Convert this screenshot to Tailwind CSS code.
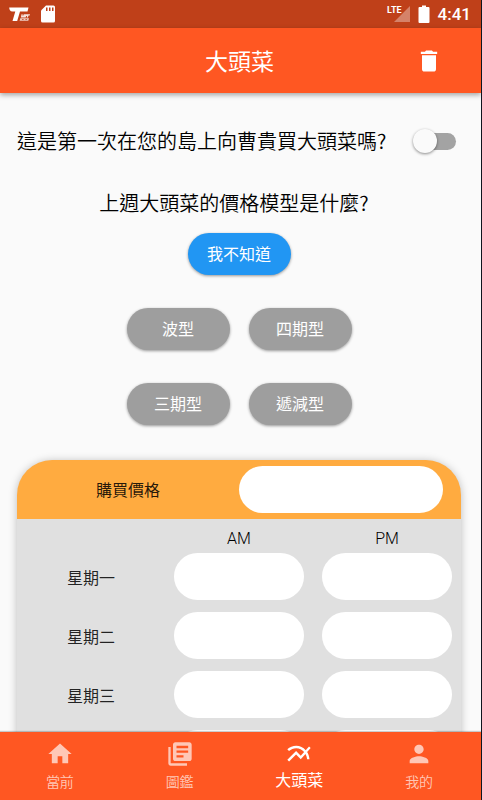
<!DOCTYPE html>
<html lang="zh-Hant">
<head>
<meta charset="utf-8">
<meta name="viewport" content="width=device-width, initial-scale=1">
<title>大頭菜</title>
<script src="https://cdn.jsdelivr.net/npm/@tailwindcss/browser@4"></script>
</head>
<body class="flex h-screen flex-col overflow-hidden border-r border-[#10151f] bg-[#fafafa] font-['Noto_Sans_CJK_TC',sans-serif] text-black/87">
  <div class="flex h-7 shrink-0 items-center justify-between bg-[#bf4019] pr-2.5 pl-2 text-white">
    <div class="flex items-center gap-2">
      <svg class="h-5 w-6" viewBox="0 0 24 20" fill="currentColor" aria-hidden="true">
        <path d="M3 3.500h17.500l-1 4H12L9.200 17H4.500l2.800-9.500H4.500C2 7.500 1.300 5.500 1.200 3.500z"/>
        <path d="M13.500 10.200h1.200l-.3 1.300h1l.3-1.300h6.300l-.3 1.200h-1.200l-.6 2h-1.200l.4-1.500h-1l-.4 1.500h-4.800z" fill-opacity=".85"/>
        <path d="M12.300 14.200h8.700l-.7 2.500h-8.700zM14 15.100l-.2.700h1.700l.2-.7zm3.500 0l-.2.700h1.700l.2-.7z" fill-rule="evenodd" fill-opacity=".75"/>
      </svg>
      <svg class="h-5 w-4" viewBox="0 0 16 20" aria-hidden="true">
        <path d="M6 1.500h7.500a1.500 1.500 0 0 1 1.500 1.500v14a1.500 1.500 0 0 1-1.500 1.500h-11A1.500 1.500 0 0 1 1 17V6.500z" fill="#fff"/>
        <path d="M6 3.500h1.500v3.500H6zM9 3.500h1.500v3.500H9zM12 3.500h1.500v3.500H12z" fill="#bf4019"/>
      </svg>
    </div>
    <div class="flex items-center">
      <span class="self-start font-['Roboto'] text-[9px] leading-3 font-bold">LTE</span>
      <svg class="-ml-2 h-4 w-4" viewBox="0 0 16 16" aria-hidden="true"><path d="M16 0v16H0z" fill="#fff" fill-opacity=".35"/></svg>
      <svg class="mx-2 h-5 w-3" viewBox="0 0 12 20" fill="currentColor" aria-hidden="true"><path d="M4 1.500h4V3h2.500a1 1 0 0 1 1 1v14a1 1 0 0 1-1 1h-9a1 1 0 0 1-1-1V4a1 1 0 0 1 1-1H4z"/></svg>
      <span class="font-['Roboto'] text-[17px] leading-5 font-medium">4:41</span>
    </div>
  </div>

  <header class="z-10 grid h-[65px] shrink-0 grid-cols-[1fr_auto_1fr] items-center bg-[#ff5722] text-white shadow-[0_2px_5px_rgba(0,0,0,0.35)]">
    <span></span>
    <h1 class="pr-0.5 pb-0.5 text-[23px] leading-8">大頭菜</h1>
    <button type="button" aria-label="刪除" class="mr-[38px] justify-self-end">
      <svg class="h-7 w-7" viewBox="0 0 24 24" fill="currentColor"><path d="M6 19c0 1.100.9 2 2 2h8c1.100 0 2-.9 2-2V7H6v12zM19 4h-3.500l-1-1h-5l-1 1H5v2h14V4z"/></svg>
    </button>
  </header>

  <main class="min-h-0 flex-1 overflow-y-auto pr-5 pl-[17px] [scrollbar-width:none]">
    <div class="mt-8 flex items-center justify-between">
      <label for="first" class="text-xl leading-8 font-[350] text-black">這是第一次在您的島上向曹貴買大頭菜嗎?</label>
      <input id="first" type="checkbox" role="switch" class="relative mr-[5px] h-[17px] w-[39px] shrink-0 appearance-none rounded-full bg-[#a3a3a3] before:absolute before:-top-1 before:-left-1 before:size-6 before:rounded-full before:bg-[#fafafa] before:shadow-[0_1px_3px_rgba(0,0,0,0.45)] checked:before:left-5">
    </div>

    <h2 class="mt-[30px] pr-2.5 text-center text-xl leading-8 font-[350] text-black">上週大頭菜的價格模型是什麼?</h2>
    <div class="mt-3.5 flex justify-center">
      <button type="button" class="h-[42px] w-[103px] rounded-full bg-[#2196f3] pb-0.5 text-base text-white shadow-[0_1px_3px_rgba(0,0,0,0.4)]">我不知道</button>
    </div>
    <div class="mt-[33px] grid grid-cols-[auto_auto] justify-center gap-x-[19px] gap-y-[33px]">
      <button type="button" class="h-[42px] w-[103px] rounded-full bg-[#9e9e9e] pb-0.5 text-base text-white shadow-[0_1px_3px_rgba(0,0,0,0.4)]">波型</button>
      <button type="button" class="h-[42px] w-[103px] rounded-full bg-[#9e9e9e] pb-0.5 text-base text-white shadow-[0_1px_3px_rgba(0,0,0,0.4)]">四期型</button>
      <button type="button" class="h-[42px] w-[103px] rounded-full bg-[#9e9e9e] pb-0.5 text-base text-white shadow-[0_1px_3px_rgba(0,0,0,0.4)]">三期型</button>
      <button type="button" class="h-[42px] w-[103px] rounded-full bg-[#9e9e9e] pb-0.5 text-base text-white shadow-[0_1px_3px_rgba(0,0,0,0.4)]">遞減型</button>
    </div>

    <section class="mt-[35px] overflow-hidden rounded-t-[35px] bg-[#e0e0e0] shadow-[0_1px_8px_rgba(0,0,0,0.25)]">
      <div class="grid h-[59px] grid-cols-2 items-center bg-[#ffab40]">
        <label for="price" class="pb-0.5 text-center text-base">購買價格</label>
        <div class="pr-[18px]"><input id="price" type="text" inputmode="numeric" class="block h-[47px] w-full rounded-full bg-white px-5"></div>
      </div>
      <table class="w-full table-fixed text-center text-base">
        <thead>
          <tr class="font-['Roboto'] leading-4 text-black">
            <td class="pt-3"></td>
            <th scope="col" id="am" class="pt-3 font-light">AM</th>
            <th scope="col" id="pm" class="pt-3 font-light">PM</th>
          </tr>
        </thead>
        <tbody>
          <tr>
            <th scope="row" id="d1" class="font-normal">星期一</th>
            <td class="px-[9px] py-1.5"><input type="text" inputmode="numeric" aria-labelledby="d1 am" class="block h-[47px] w-full rounded-full bg-white px-5"></td>
            <td class="px-[9px] py-1.5"><input type="text" inputmode="numeric" aria-labelledby="d1 pm" class="block h-[47px] w-full rounded-full bg-white px-5"></td>
          </tr>
          <tr>
            <th scope="row" id="d2" class="font-normal">星期二</th>
            <td class="px-[9px] py-1.5"><input type="text" inputmode="numeric" aria-labelledby="d2 am" class="block h-[47px] w-full rounded-full bg-white px-5"></td>
            <td class="px-[9px] py-1.5"><input type="text" inputmode="numeric" aria-labelledby="d2 pm" class="block h-[47px] w-full rounded-full bg-white px-5"></td>
          </tr>
          <tr>
            <th scope="row" id="d3" class="font-normal">星期三</th>
            <td class="px-[9px] py-1.5"><input type="text" inputmode="numeric" aria-labelledby="d3 am" class="block h-[47px] w-full rounded-full bg-white px-5"></td>
            <td class="px-[9px] py-1.5"><input type="text" inputmode="numeric" aria-labelledby="d3 pm" class="block h-[47px] w-full rounded-full bg-white px-5"></td>
          </tr>
          <tr>
            <td></td>
            <td class="px-[9px] py-1.5"><input type="text" inputmode="numeric" aria-label="星期四 AM" class="block h-[47px] w-full rounded-full bg-white px-5"></td>
            <td class="px-[9px] py-1.5"><input type="text" inputmode="numeric" aria-label="星期四 PM" class="block h-[47px] w-full rounded-full bg-white px-5"></td>
          </tr>
        </tbody>
      </table>
    </section>
  </main>

  <nav class="z-10 grid h-[68px] shrink-0 grid-cols-4 bg-[#ff5722] pr-0.5 text-sm text-[#ffc7b6] shadow-[0_-1px_1px_rgba(0,0,0,0.2)]">
    <a href="#" class="flex flex-col items-center pt-2">
      <svg class="h-7 w-7" viewBox="0 0 24 24" fill="currentColor" aria-hidden="true"><path d="M10 20v-6h4v6h5v-8h3L12 3 2 12h3v8z"/></svg>
      <span class="leading-[26px] font-[350]">當前</span>
    </a>
    <a href="#" class="flex flex-col items-center pt-2">
      <svg class="h-7 w-7" viewBox="0 0 24 24" fill="currentColor" aria-hidden="true"><path d="M4 6H2v14c0 1.100.9 2 2 2h14v-2H4V6zm16-4H8c-1.100 0-2 .9-2 2v12c0 1.100.9 2 2 2h12c1.100 0 2-.9 2-2V4c0-1.100-.9-2-2-2zm-1 9H9V9h10v2zm-4 4H9v-2h6v2zm4-8H9V5h10v2z"/></svg>
      <span class="leading-[26px] font-[350]">圖鑑</span>
    </a>
    <a href="#" aria-current="page" class="flex flex-col items-center pt-2 text-white">
      <svg class="h-7 w-7" viewBox="0 0 24 24" fill="currentColor" aria-hidden="true"><path d="M22 6.920l-1.410-1.410-2.850 3.210C15.680 6.400 12.830 5 9.610 5 6.720 5 4.070 6.160 2 8l1.420 1.420C5.120 7.930 7.270 7 9.610 7c2.740 0 5.090 1.260 6.770 3.240l-2.880 3.240-4-4L2 16.990l1.500 1.500 6-6.010 4 4 4.050-4.550c.75 1.350 1.250 2.900 1.440 4.550H21c-.22-2.300-.95-4.390-2.040-6.140L22 6.920z"/></svg>
      <span class="text-base leading-[22px]">大頭菜</span>
    </a>
    <a href="#" class="flex flex-col items-center pt-2">
      <svg class="h-7 w-7" viewBox="0 0 24 24" fill="currentColor" aria-hidden="true"><path d="M12 12c2.210 0 4-1.790 4-4s-1.790-4-4-4-4 1.790-4 4 1.790 4 4 4zm0 2c-2.670 0-8 1.340-8 4v2h16v-2c0-2.660-5.330-4-8-4z"/></svg>
      <span class="leading-[26px] font-[350]">我的</span>
    </a>
  </nav>
</body>
</html>
